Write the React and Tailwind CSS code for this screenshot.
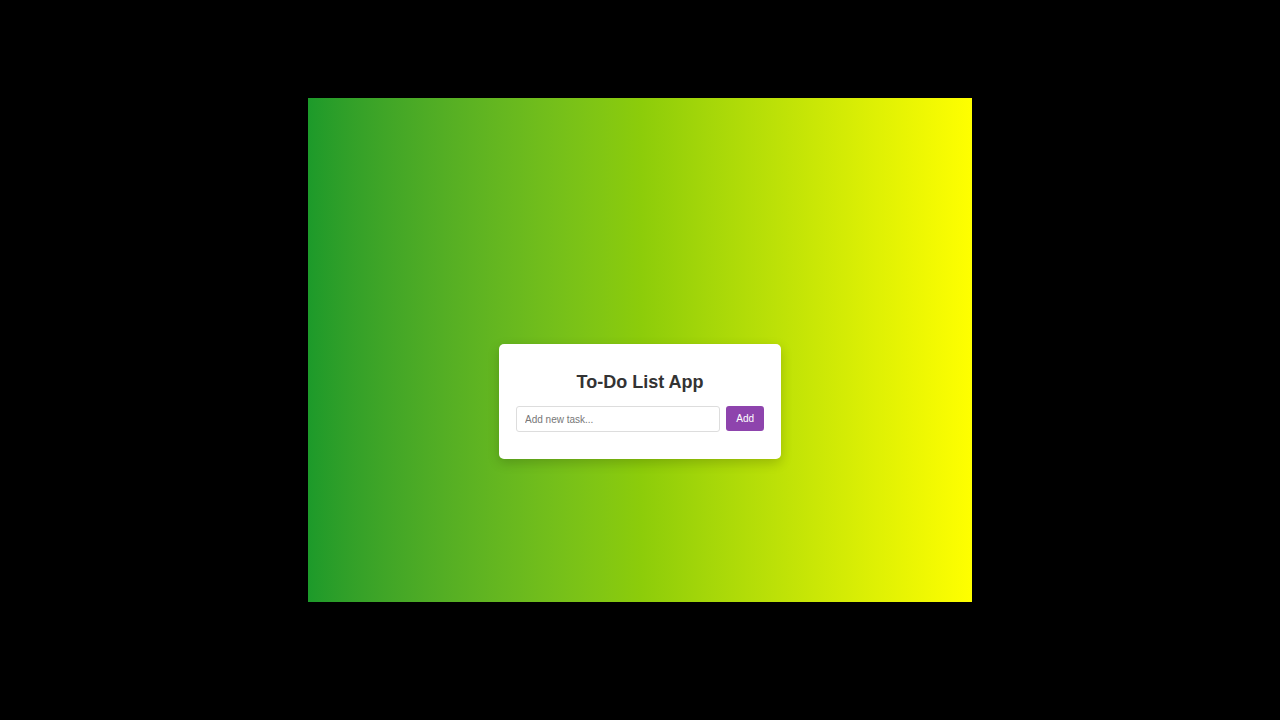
import React from "react";

export default function App() {
	return (
		<div className="w-[1280px] h-[720px] bg-black flex justify-center pt-[98px]" style={{ fontFamily: "'Liberation Sans', Arial, sans-serif" }}>
			{/* gradient stage */}
			<div className="w-[664px] h-[504px] bg-gradient-to-r from-[#1c9a2a] via-[#8ccc0a] to-[#ffff00] flex flex-col items-center pt-[246px]">
				<div className="w-[282px] bg-white rounded-[5px] shadow-[0_4px_12px_rgba(0,0,0,0.18)] px-[17px] pt-[28px] pb-[27px]">
					<h1 className="text-center text-[18px] leading-[21px] font-bold text-[#333]">To-Do List App</h1>
					<div className="flex gap-[6px] mt-[13px] items-start">
						<input
							type="text"
							placeholder="Add new task..."
							className="w-[206px] h-[26px] border border-[#ddd] rounded-[3px] px-[8px] text-[10px] text-[#333] placeholder:text-[#777] outline-none"
						/>
						<button className="w-[38px] h-[25px] bg-[#8e44ad] text-white text-[10px] rounded-[3px]">Add</button>
					</div>
				</div>
			</div>
		</div>
	);
}
